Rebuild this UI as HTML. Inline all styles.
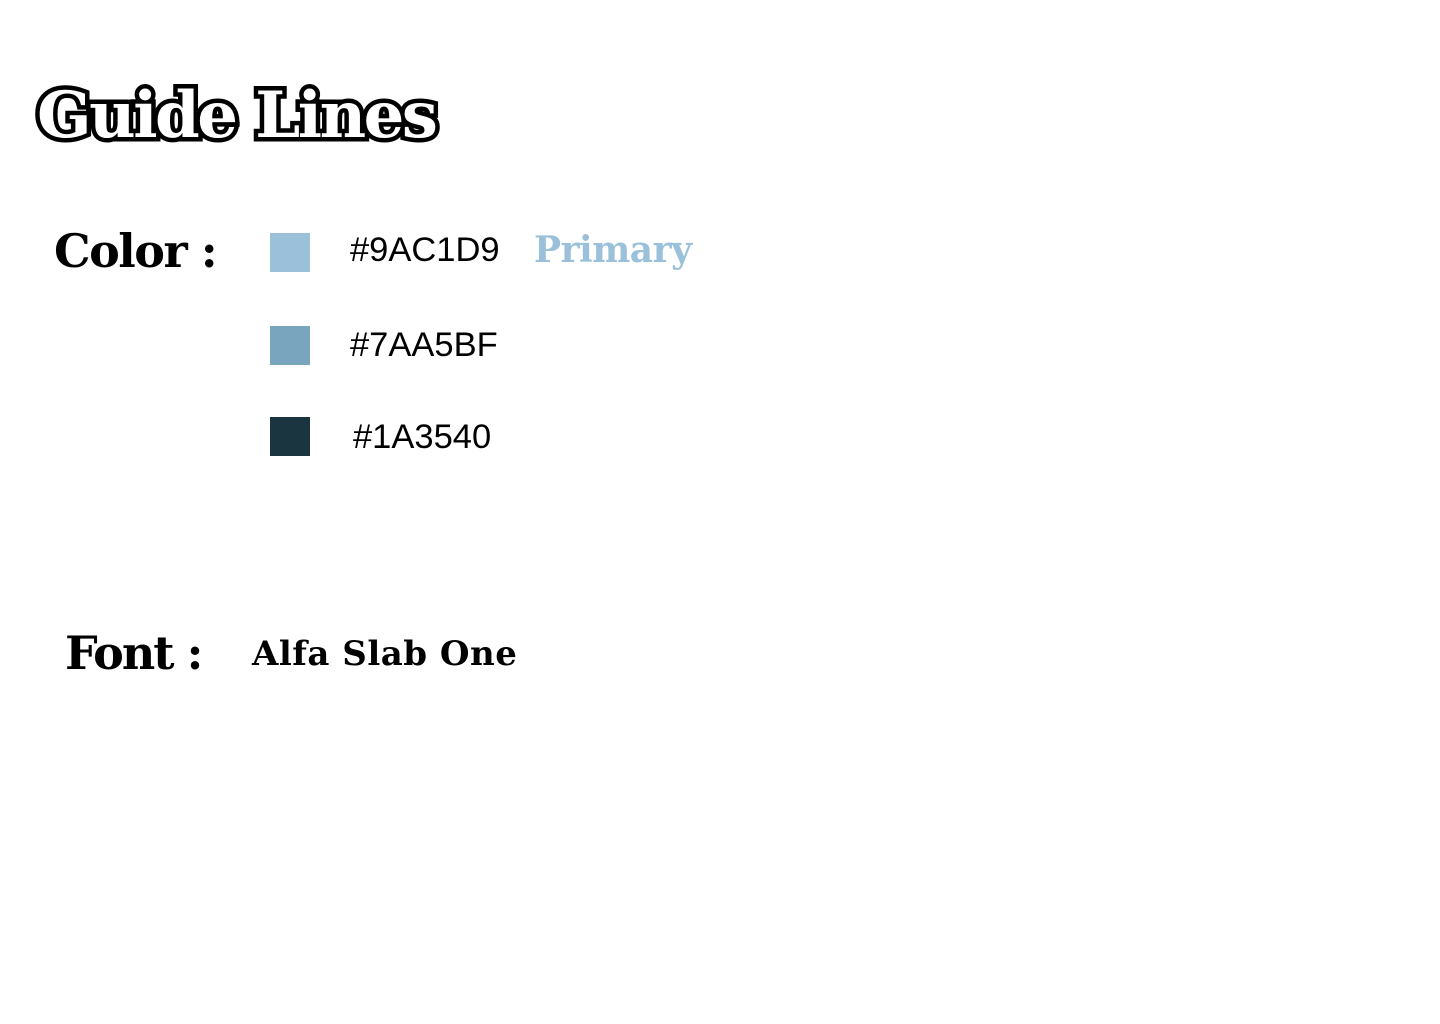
<!DOCTYPE html>
<html><head><style>
body{margin:0;width:1440px;height:1024px;background:#fff;position:relative;overflow:hidden}
.s{font-family:"DejaVu Serif","Liberation Serif",serif;font-weight:bold;position:absolute;white-space:nowrap}
.h{font-family:"Liberation Sans",sans-serif;position:absolute;font-size:34.5px;color:#000;white-space:nowrap}
.sq{position:absolute;left:270px;width:40px;height:39px}
</style></head><body>
<div class="s" style="left:37px;top:78px;font-size:64px;color:#fff;-webkit-text-stroke:9px #000;paint-order:stroke fill;letter-spacing:-2.5px">Guide Lines</div>
<div class="s" style="left:54px;top:224px;font-size:46px;letter-spacing:-1.5px">Color :</div>
<div class="sq" style="top:233px;background:#9AC1D9"></div>
<div class="sq" style="top:326px;background:#7AA5BF"></div>
<div class="sq" style="top:417px;background:#1A3540"></div>
<div class="h" style="left:350px;top:231px">#9AC1D9</div>
<div class="s" style="left:534px;top:229px;font-size:36px;color:#9AC1D9;letter-spacing:-0.5px">Primary</div>
<div class="h" style="left:350px;top:326px">#7AA5BF</div>
<div class="h" style="left:353px;top:418px">#1A3540</div>
<div class="s" style="left:65px;top:626px;font-size:46px;letter-spacing:-2px">Font :</div>
<div class="s" style="left:252px;top:634px;font-size:34px;letter-spacing:0.5px">Alfa Slab One</div>
</body></html>
